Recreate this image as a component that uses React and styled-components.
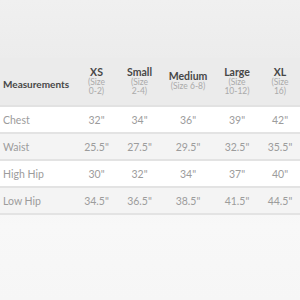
import React from "react";
import styled, { createGlobalStyle } from "styled-components";

const GlobalStyle = createGlobalStyle`
  html, body {
    margin: 0;
    padding: 0;
    width: 300px;
    height: 300px;
    overflow: hidden;
    background: #f8f8f8;
  }
`;

const sizes = [
  { name: "XS", sub: ["(Size", "0-2)"], width: 41 },
  { name: "Small", sub: ["(Size", "2-4)"], width: 45 },
  { name: "Medium", sub: ["(Size 6-8)"], width: 52 },
  { name: "Large", sub: ["(Size", "10-12)"], width: 46 },
  { name: "XL", sub: ["(Size", "16)"], width: 40 },
];

const rows = [
  { label: "Chest", values: ['32"', '34"', '36"', '39"', '42"'] },
  { label: "Waist", values: ['25.5"', '27.5"', '29.5"', '32.5"', '35.5"'] },
  { label: "High Hip", values: ['30"', '32"', '34"', '37"', '40"'] },
  { label: "Low Hip", values: ['34.5"', '36.5"', '38.5"', '41.5"', '44.5"'] },
];

const Page = styled.div`
  width: 300px;
  height: 300px;
  font-family: Lato, "Open Sans", sans-serif;
  background: linear-gradient(#f0f0f0 0px, #ececec 58px, #f8f8f8 226px, #f6f6f6 300px);
  padding-top: 58px;
  box-sizing: border-box;
`;

const Table = styled.table`
  width: 300px;
  border-collapse: collapse;
  table-layout: fixed;
`;

const HeadRow = styled.tr`
  height: 48px;
  background: #ebebeb;
  border-bottom: 2px solid #e2e2e2;
`;

const Row = styled.tr`
  height: 27px;
  background: ${(p) => (p.$shade ? "#f4f4f4" : "#ffffff")};
  border-bottom: 2px solid #e3e3e3;
`;

const LabelHead = styled.th`
  text-align: left;
  padding: 4px 0 0 3px;
  font-size: 10px;
  font-weight: 700;
  color: #474747;
`;

const SizeHead = styled.th`
  padding: 0;
  text-align: center;
  vertical-align: middle;
  font-weight: 700;
  color: #474747;
`;

const SizeName = styled.div`
  font-size: 10.5px;
  line-height: 11px;
`;

const SizeSub = styled.div`
  font-size: 8.5px;
  line-height: 9.5px;
  font-weight: 400;
  color: #aaaaaa;
`;

const Label = styled.td`
  padding: 0 0 0 3px;
  font-size: 10.5px;
  color: #9c9c9c;
`;

const Value = styled.td`
  padding: 0;
  text-align: center;
  font-size: 10.5px;
  color: #9c9c9c;
`;

export default function App() {
  return (
    <Page>
      <GlobalStyle />
      <Table>
        <colgroup>
          <col style={{ width: 76 }} />
          {sizes.map((s) => (
            <col key={s.name} style={{ width: s.width }} />
          ))}
        </colgroup>
        <thead>
          <HeadRow>
            <LabelHead>Measurements</LabelHead>
            {sizes.map((s) => (
              <SizeHead key={s.name}>
                <SizeName>{s.name}</SizeName>
                {s.sub.map((line) => (
                  <SizeSub key={line}>{line}</SizeSub>
                ))}
              </SizeHead>
            ))}
          </HeadRow>
        </thead>
        <tbody>
          {rows.map((r, i) => (
            <Row key={r.label} $shade={i % 2 === 1}>
              <Label>{r.label}</Label>
              {r.values.map((v, j) => (
                <Value key={j}>{v}</Value>
              ))}
            </Row>
          ))}
        </tbody>
      </Table>
    </Page>
  );
}
